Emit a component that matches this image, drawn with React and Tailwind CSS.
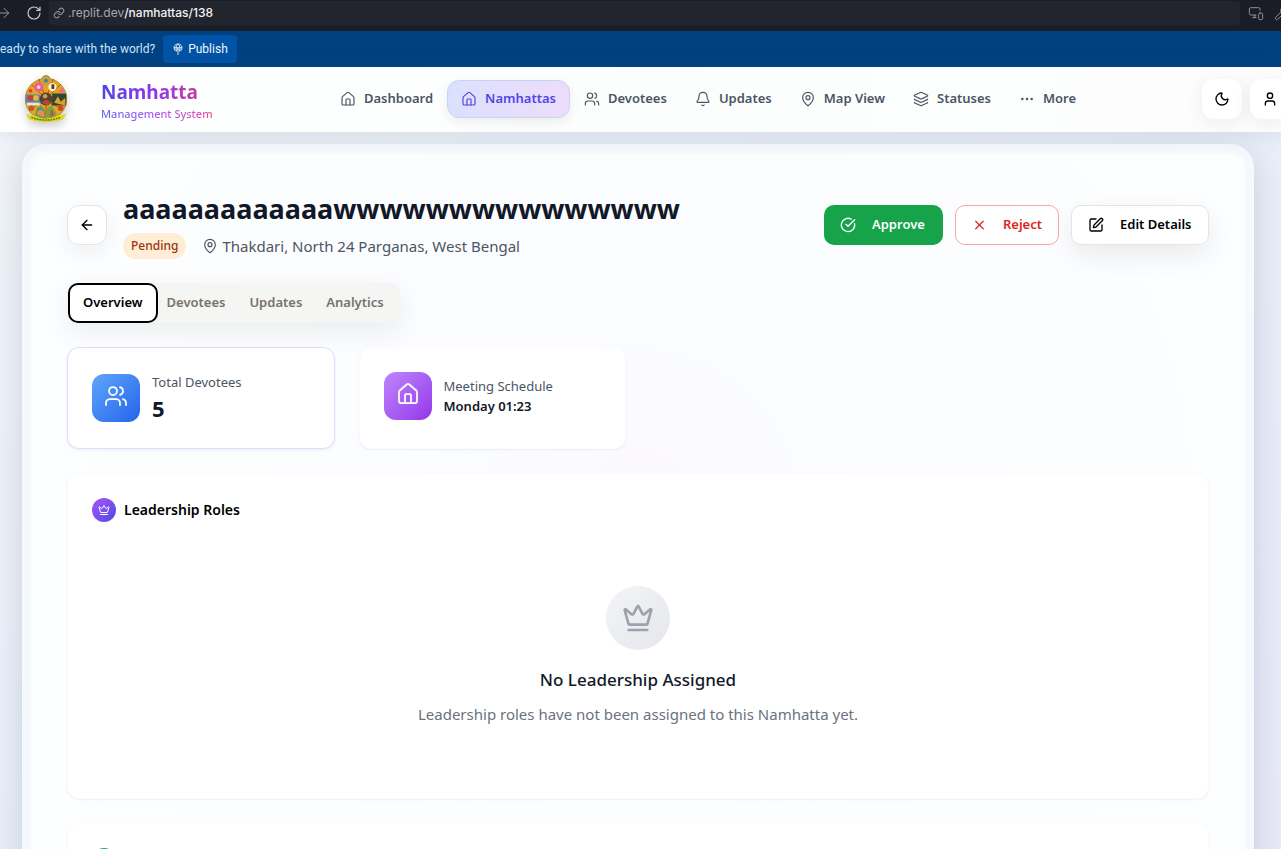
import {
  ArrowLeft, ArrowRight, Bell, CircleCheckBig, Crown, Ellipsis, House, Layers,
  MapPin, MonitorSmartphone, Moon, RotateCw, SquarePen, User, Users, Wrench, X,
} from "lucide-react";

const NAV = [
  { label: "Dashboard", icon: House },
  { label: "Namhattas", icon: House, active: true },
  { label: "Devotees", icon: Users },
  { label: "Updates", icon: Bell },
  { label: "Map View", icon: MapPin },
  { label: "Statuses", icon: Layers },
  { label: "More", icon: Ellipsis },
];

const TABS = ["Overview", "Devotees", "Updates", "Analytics"];

const CARD =
  "rounded-xl border border-[#fafbfe] bg-white shadow-[0_1px_2px_rgba(30,41,80,0.06)]";
const ICON_BUTTON = "flex size-10 shrink-0 items-center justify-center rounded-xl bg-white text-black";

function BrowserBar() {
  return (
    <div className="flex h-[31px] items-start overflow-hidden bg-[#1b1d26] text-[#c9ccd3]">
      <ArrowRight className="-ml-1 mt-[5px] size-4 shrink-0 text-[#9498a3]" strokeWidth={1.5} aria-hidden="true" />
      <button type="button" aria-label="Reload" className="ml-3.5 mt-[5px] shrink-0">
        <RotateCw className="size-4" strokeWidth={1.75} />
      </button>
      <div className="ml-[7px] mt-px flex h-6 flex-1 items-center rounded-[4px] bg-[#23252e] pl-1 font-['Inter',sans-serif] text-[12px]">
        <svg viewBox="0 0 24 24" className="size-3 shrink-0" fill="none" stroke="#8b8f9a" strokeWidth="2.2" strokeLinecap="round" aria-hidden="true">
          <path d="M10 13a5 5 0 0 0 7.5.5l3-3a5 5 0 0 0-7-7l-1.800 1.700" />
          <path d="M14 11a5 5 0 0 0-7.500-.500l-3 3a5 5 0 0 0 7 7l1.700-1.700" />
        </svg>
        <span className="ml-[3px] text-[#a3a6ae]">.replit.dev</span>
        <span className="font-medium text-[#f1f2f4]">/namhattas/138</span>
      </div>
      <MonitorSmartphone className="ml-2 mt-[5px] size-4 shrink-0 text-[#8b8f9a]" strokeWidth={1.5} aria-hidden="true" />
      <Wrench className="-mr-[9px] ml-2.5 mt-[5px] size-4 shrink-0 text-[#8b8f9a]" strokeWidth={1.5} aria-hidden="true" />
    </div>
  );
}

function PublishBar() {
  return (
    <div className="flex h-9 items-center gap-2 bg-[#004182] font-['Roboto',sans-serif] text-[12px] text-[#cfe4f7]">
      <span>eady to share with the world?</span>
      <button type="button" className="flex h-7 items-center gap-1 rounded-[4px] bg-[#0053a6] px-[9px] text-[#f0f6fc]">
        <svg viewBox="0 0 24 24" className="size-3" fill="none" stroke="currentColor" strokeWidth="1.800" strokeLinecap="round" aria-hidden="true">
          <path d="M7.500 16.500A8 8 0 1 1 16.500 16.500" />
          <path d="M4.500 9.500h15M9 16c-2-5-1.500-10 3-14 4.500 4 5 9 3 14M12 11v12M9 14l3-3 3 3" />
        </svg>
        Publish
      </button>
    </div>
  );
}

function Logo() {
  return (
    <svg viewBox="0 0 48 52" className="h-12 w-11 shrink-0 drop-shadow-[0_4px_5px_rgba(0,0,0,0.22)]" role="img" aria-label="Namhatta logo">
      <circle cx="24" cy="5" r="4.500" fill="#d9a12c" stroke="#8b7833" />
      <circle cx="24" cy="26" r="22.500" fill="#e6a31f" stroke="#a9882c" strokeWidth="1" />
      <path d="M19 3h10l-2 8h-6z" fill="#b8a24a" />
      <circle cx="24" cy="6" r="2" fill="#4f79a4" />
      <path d="M24 26L8 10M24 26L40 10M24 26v22M24 26L16 4M24 26L32 4M24 26L6 38M24 26l18 12" stroke="#8c4b14" strokeWidth="0.800" />
      <path d="M2 21h15l3 10-18 1z" fill="#5a89a6" />
      <path d="M31 20h15v13H30z" fill="#314735" />
      <circle cx="7" cy="25" r="3" fill="#c93a39" />
      <circle cx="13" cy="25" r="3" fill="#e8ba31" />
      <path d="M3 30h14v3H3z" fill="#f0e5cf" />
      <path d="M33 30l4-7 3 6 5-4v8z" fill="#e0a32a" />
      <circle cx="16" cy="13" r="5" fill="#ef5c9b" />
      <circle cx="16" cy="13" r="2" fill="#f9d4df" />
      <circle cx="31" cy="13" r="4.500" fill="#fff0cc" />
      <path d="M30 10h3v5h-3z" fill="#503629" />
      <circle cx="7" cy="17" r="2" fill="#cf4528" />
      <circle cx="41" cy="17" r="2.500" fill="#ee6b94" />
      <circle cx="24" cy="26" r="7" fill="#594034" />
      <circle cx="23" cy="23" r="2.500" fill="#c89a67" />
      <path d="M20 30c1-4 7-4 9 0l-4 3z" fill="#b74833" />
      <circle cx="8" cy="36" r="3" fill="#c75726" />
      <circle cx="40" cy="36" r="3" fill="#c94b25" />
      <path d="M12 44l2-8 5-3 4 6v9z" fill="#4c9c74" />
      <path d="M14 43a4 5 0 0 1 8 0v3z" fill="#f08a47" />
      <path d="M25 46V36l5-3 6 10-5 4z" fill="#73a548" />
      <path d="M28 45l2-9 3 8z" fill="#bb563d" />
      <path d="M2 42q5 2 9 2 13 7 26 0 4 0 9-2l-3 6q-19 6-38 0z" fill="#dcd916" />
      <path d="M8 46q16 6 32 0" fill="none" stroke="#5b6a16" strokeWidth="1.500" strokeDasharray="2 1" />
    </svg>
  );
}

function Header() {
  return (
    <header className="relative z-10 flex h-[65px] items-center overflow-hidden bg-linear-to-r from-white via-[#fcfefe] to-[#fdfdfd] pb-px pl-6 shadow-[0_1px_20px_rgba(60,80,120,0.14)]">
      <a href="#home" className="flex w-[302px] shrink-0 items-center gap-[33px]">
        <Logo />
        <span className="flex flex-col pt-1">
          <span className="bg-linear-to-r from-[#4f46e5] via-[#9333ea] to-[#db2777] bg-clip-text text-[19px] leading-6 font-bold text-transparent">Namhatta</span>
          <span className="bg-linear-to-r from-[#6366f1] via-[#a855f7] to-[#ec4899] bg-clip-text pt-0.5 text-[11px] leading-4 font-medium text-transparent">Management System</span>
        </span>
      </a>
      <nav className="flex flex-1 items-center" aria-label="Main">
        {NAV.map(({ label, icon: Icon, active }) => (
          <a
            key={label}
            href={"#" + label}
            className={
              active
                ? "flex h-[38px] items-center gap-2 rounded-xl border border-[#c5d3fb] bg-linear-to-r from-[#dbe1fd] to-[#eddcfb] px-[13px] text-[13px] font-semibold whitespace-nowrap text-[#4f46e5] shadow-[0_4px_12px_rgba(0,0,0,0.07)]"
                : "flex h-[38px] items-center gap-2 px-3.5 text-[13px] font-semibold whitespace-nowrap text-[#4b5563]"
            }
          >
            <Icon className="size-4" strokeWidth={1.75} aria-hidden="true" />
            {label}
          </a>
        ))}
      </nav>
      <div className="-mr-[9px] flex gap-2">
        <button type="button" aria-label="Dark mode" className={ICON_BUTTON + " shadow-[0_4px_20px_rgba(0,0,0,0.07)]"}>
          <Moon className="size-4" />
        </button>
        <button type="button" aria-label="Account" className={ICON_BUTTON + " shadow-[0_4px_20px_rgba(0,0,0,0.07)]"}>
          <User className="size-4" />
        </button>
      </div>
    </header>
  );
}

function TitleRow() {
  return (
    <div className="flex items-center gap-4">
      <button type="button" aria-label="Back" className={ICON_BUTTON + " border border-stone-200 shadow-[0_8px_24px_rgba(0,0,0,0.06)]"}>
        <ArrowLeft className="size-4" />
      </button>
      <div className="min-w-0 flex-1">
        <h1 className="truncate text-[27px] leading-9 font-bold text-[#111827]">aaaaaaaaaaaaawwwwwwwwwwwwwww</h1>
        <div className="mt-1.5 flex items-center gap-4">
          <span className="flex h-[26px] items-center rounded-full bg-[#ffedd5] px-2 text-[12px] font-medium text-[#9a3412]">Pending</span>
          <span className="flex items-center gap-1 text-[15px] text-[#4b5563]">
            <MapPin className="size-4" strokeWidth={1.75} aria-hidden="true" />
            Thakdari, North 24 Parganas, West Bengal
          </span>
        </div>
      </div>
      <div className="flex shrink-0 gap-3 text-[13px] font-semibold">
        <button type="button" className="flex h-10 w-[119px] items-center gap-4 rounded-[10px] bg-[#16a34a] px-4 text-white">
          <CircleCheckBig className="size-4" /> Approve
        </button>
        <button type="button" className="flex h-10 w-26 items-center gap-4 rounded-[10px] border border-[#fca5a5] bg-white px-4 text-[#dc2626]">
          <X className="size-4" /> Reject
        </button>
        <button type="button" className="flex h-10 w-[138px] items-center gap-4 rounded-[10px] border border-stone-200 bg-white px-4 text-black shadow-[0_10px_28px_rgba(0,0,0,0.08)]">
          <SquarePen className="size-4" /> Edit Details
        </button>
      </div>
    </div>
  );
}

function Tabs() {
  return (
    <div role="tablist" className="mt-6 flex h-10 w-fit rounded-[10px] bg-[#f5f5f4] pr-1 pl-px text-[13px] font-semibold text-[#78716c] shadow-[0_8px_28px_rgba(0,0,0,0.07)]">
      {TABS.map((tab, i) => (
        <button
          key={tab}
          type="button"
          role="tab"
          aria-selected={i === 0}
          className={
            i === 0
              ? "-mr-[3px] rounded-[10px] border-2 border-black bg-white px-[13px] text-black"
              : "px-3"
          }
        >
          {tab}
        </button>
      ))}
    </div>
  );
}

function Stats() {
  return (
    <div className="mt-6 grid grid-cols-4 gap-6">
      <div className="flex h-[102px] items-center gap-3 rounded-xl border border-[#e0dcfb] bg-white px-6 shadow-[0_1px_3px_rgba(30,41,80,0.08)]">
        <div className="flex size-12 items-center justify-center rounded-xl bg-linear-to-br from-[#60a5fa] to-[#2563eb] pb-1 text-white">
          <Users className="size-6" strokeWidth={1.75} aria-hidden="true" />
        </div>
        <div>
          <p className="text-[13px] leading-5 text-[#4b5563]">Total Devotees</p>
          <p className="text-[22px] leading-8 font-bold text-[#111827]">5</p>
        </div>
      </div>
      <div className={CARD + " flex h-[102px] items-start gap-3 p-6"}>
        <div className="flex size-12 items-center justify-center rounded-xl bg-linear-to-br from-[#c084fc] to-[#9333ea] pb-1 text-white">
          <House className="size-6" strokeWidth={1.75} aria-hidden="true" />
        </div>
        <div className="pt-1">
          <p className="text-[13px] leading-5 text-[#4b5563]">Meeting Schedule</p>
          <p className="text-[13px] leading-5 font-semibold text-[#111827]">Monday 01:23</p>
        </div>
      </div>
    </div>
  );
}

function Leadership() {
  return (
    <section className={CARD + " mt-6 p-6"}>
      <h2 className="flex items-center gap-2 text-[14px] leading-6 font-semibold text-black">
        <span className="flex size-6 items-center justify-center rounded-full bg-linear-to-br from-[#a855f7] to-[#4f46e5] text-white">
          <Crown className="size-3" aria-hidden="true" />
        </span>
        Leadership Roles
      </h2>
      <div className="flex flex-col items-center pt-16 pb-12 text-center">
        <div className="flex size-16 items-center justify-center rounded-full bg-linear-to-br from-[#f3f4f6] to-[#e5e7eb] text-[#9ca3af]">
          <Crown className="size-8" aria-hidden="true" />
        </div>
        <h3 className="mt-4 text-[17px] leading-7 font-medium text-[#111827]">No Leadership Assigned</h3>
        <p className="mt-2 text-[15px] leading-6 text-[#6b7280]">Leadership roles have not been assigned to this Namhatta yet.</p>
      </div>
    </section>
  );
}

export default function App() {
  return (
    <div className="flex h-screen flex-col overflow-hidden bg-[#eef2f8] font-['Noto_Sans','Open_Sans',sans-serif]">
      <BrowserBar />
      <PublishBar />
      <Header />
      <main className="flex-1 overflow-hidden bg-linear-to-br from-[#f1f5f9] via-[#e9eff9] to-[#e8eafa] pt-3 pr-[27px] pl-[22px]">
        <div className="min-h-full rounded-3xl border-[7px] border-b-0 border-[#f5f8fd] bg-[radial-gradient(circle_at_50%_45%,#fbf8fd_0%,#fbfcff_22%,#fcfdff_60%,#fdfeff_100%)] px-[38px] pt-10 pb-10 shadow-[0_8px_32px_rgba(50,55,90,0.18),inset_0_0_5px_rgba(120,140,180,0.10)]">
          <TitleRow />
          <Tabs />
          <Stats />
          <Leadership />
          <section className={CARD + " mt-6 p-6"}>
            <span className="block size-6 rounded-full bg-linear-to-br from-[#10b981] to-[#0d9488]" />
          </section>
        </div>
      </main>
    </div>
  );
}
